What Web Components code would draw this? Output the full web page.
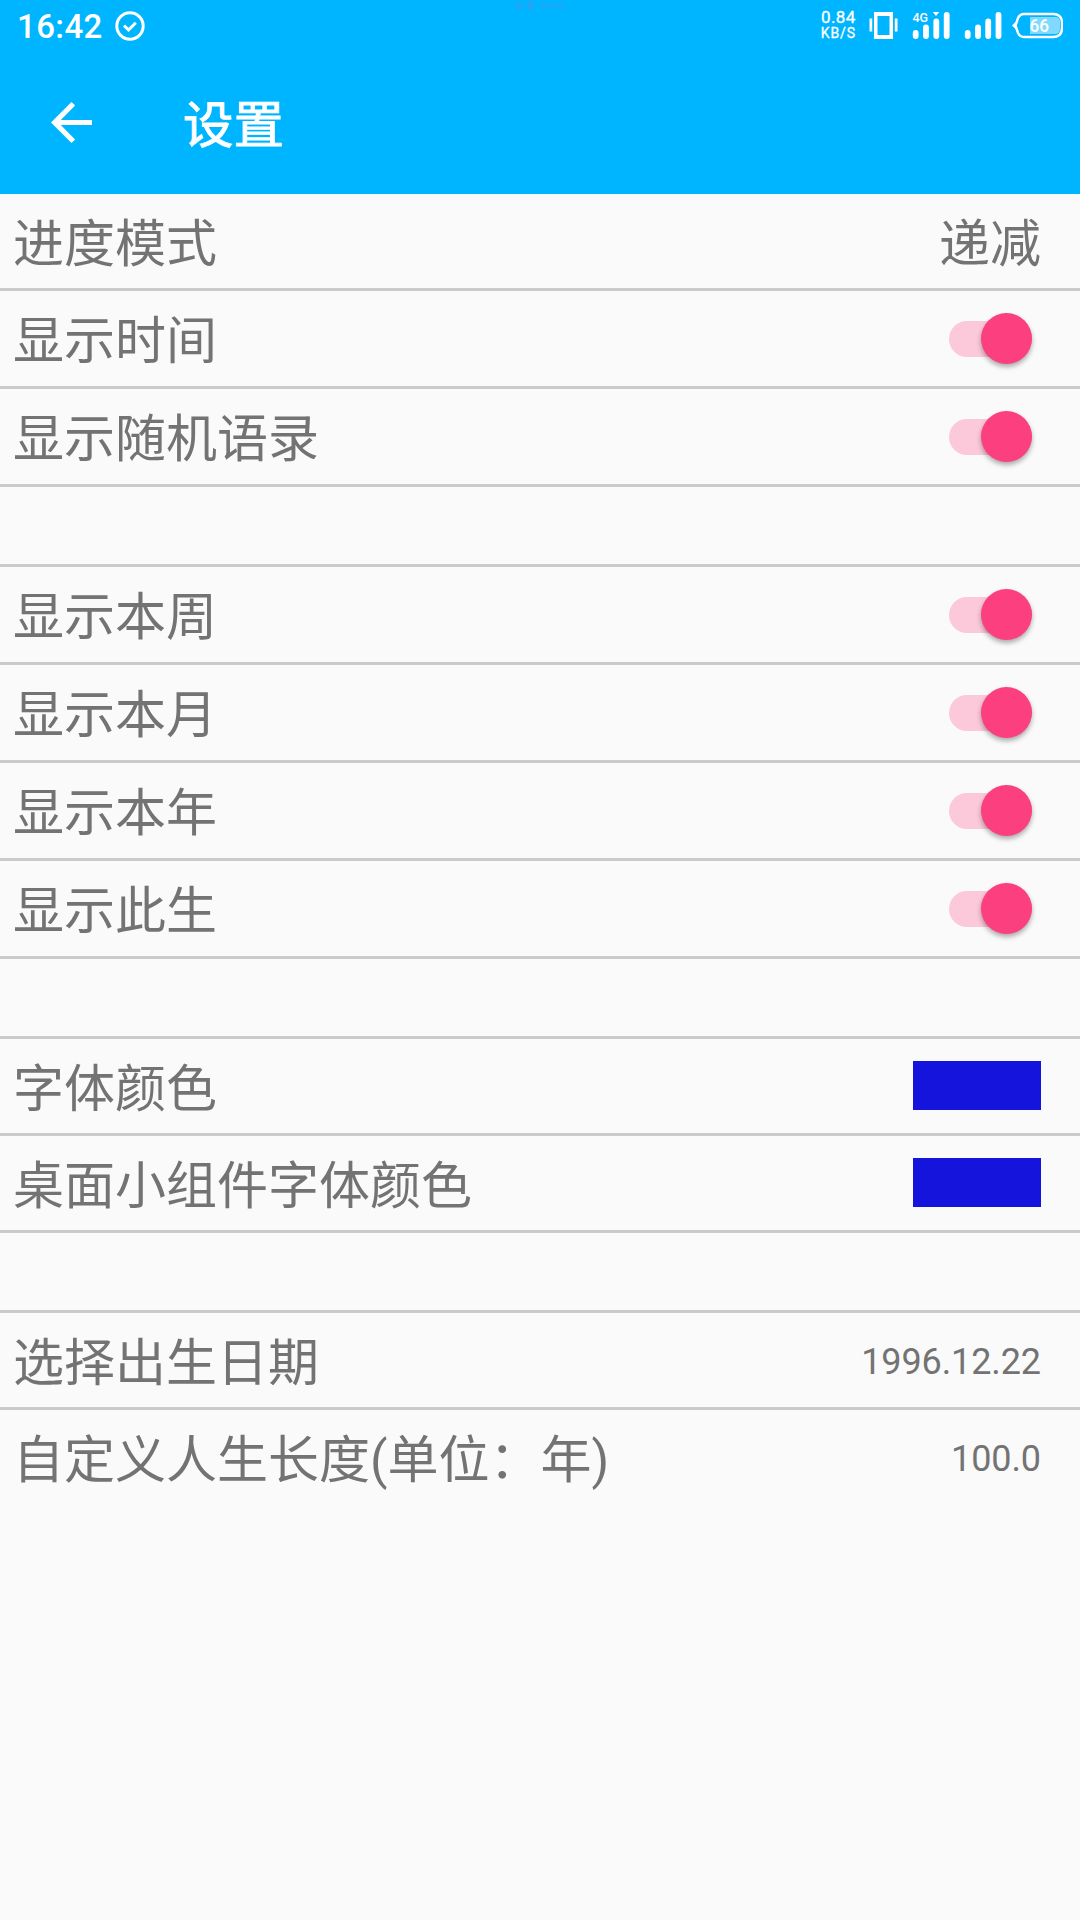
<!DOCTYPE html>
<html lang="zh-CN">
<head>
<meta charset="UTF-8">
<title>设置</title>
<style>
  body {
    margin: 0;
    background: #fafafa;
    color: #737373;
    font-family: Roboto, "Noto Sans CJK SC", sans-serif;
    --brand: #00b5ff;
    --accent: #fb3f7f;
    --divider: #cacaca;
  }
</style>
</head>
<body>
<settings-page>
  <status-bar slot="header" time="16:42" speed="0.84" battery="66"></status-bar>
  <app-toolbar slot="header">设置</app-toolbar>

  <setting-group>
    <setting-row>进度模式<span slot="value">递减</span></setting-row>
    <setting-row tall>显示时间<toggle-switch slot="value"></toggle-switch></setting-row>
    <setting-row tall>显示随机语录<toggle-switch slot="value"></toggle-switch></setting-row>
  </setting-group>
  <setting-group>
    <setting-row tall>显示本周<toggle-switch slot="value"></toggle-switch></setting-row>
    <setting-row tall>显示本月<toggle-switch slot="value"></toggle-switch></setting-row>
    <setting-row tall>显示本年<toggle-switch slot="value"></toggle-switch></setting-row>
    <setting-row tall>显示此生<toggle-switch slot="value"></toggle-switch></setting-row>
  </setting-group>
  <setting-group>
    <setting-row>字体颜色<color-swatch slot="value" color="#1414dc"></color-swatch></setting-row>
    <setting-row>桌面小组件字体颜色<color-swatch slot="value" color="#1414dc"></color-swatch></setting-row>
  </setting-group>
  <setting-group>
    <setting-row small>选择出生日期<span slot="value">1996.12.22</span></setting-row>
    <setting-row small last>自定义人生长度(单位：年)<span slot="value">100.0</span></setting-row>
  </setting-group>
</settings-page>

<script>
/**
 * Base class: renders the template of the subclass in an open shadow root
 */
class BaseElement extends HTMLElement {
  constructor() {
    super();
    this.attachShadow({ mode: "open" });
  }

  connectedCallback() {
    this.shadowRoot.innerHTML = this.render();
  }
}

/**
 * SettingsPage: header on top, groups below
 */
class SettingsPage extends BaseElement {
  render() {
    return `
      <style>
        :host {
          display: flex;
          flex-direction: column;
          width: 1080px;
          height: 1920px;
          overflow: hidden;
        }
        header {
          height: 194px;
          background: var(--brand);
          color: #fff;
        }
        main {
          display: flex;
          flex-direction: column;
        }
      </style>
      <header><slot name="header"></slot></header>
      <main><slot></slot></main>
    `;
  }
}

/**
 * StatusBar
 *
 * Attributes:
 * - time: clock text
 * - speed: network speed in KB/S
 * - battery: battery percentage
 */
class StatusBar extends BaseElement {
  render() {
    return `
      <style>
        :host {
          position: relative;
          display: flex;
          justify-content: space-between;
          height: 50px;
          box-sizing: border-box;
          padding: 0 17px;
        }
        .side {
          display: flex;
          align-items: center;
          height: 52px;
        }
        .time {
          font-size: 33px;
          font-weight: 500;
          letter-spacing: 0.4px;
          margin-right: 12px;
        }
        .speed {
          display: flex;
          flex-direction: column;
          align-items: center;
          font-size: 17px;
          line-height: 15px;
          letter-spacing: 0.4px;
          margin: 0 13px 1px 0;
          -webkit-text-stroke: 0.3px #fff;
        }
        .speed small {
          font-size: 14px;
          line-height: 16px;
          letter-spacing: 0.9px;
        }
        svg {
          display: block;
          fill: #fff;
        }
        svg text {
          font-weight: 500;
        }
        .mark {
          position: absolute;
          left: 514px;
          top: 0;
          fill: #3a9bf0;
          opacity: 0.5;
        }
      </style>
      <div class="side">
        <span class="time">${this.getAttribute("time")}</span>
        <svg width="30" height="52" viewBox="0 0 30 52">
          <circle cx="15" cy="26" r="13.2" fill="none" stroke="#fff" stroke-width="3"/>
          <path d="M9 25.500l4.500 4.500 7.300-7.300" fill="none" stroke="#fff" stroke-width="3"/>
        </svg>
      </div>
      <svg class="mark" width="52" height="12" viewBox="0 0 52 12">
        <path d="M2 2h6v7H2zM13 1h7v9h-7zM27 3h4v5h-4zM33 3h4v5h-4zM39 3h4v5h-4zM45 3h4v5h-4z"/>
      </svg>
      <div class="side">
        <div class="speed">
          <span>${this.getAttribute("speed")}</span>
          <small>KB/S</small>
        </div>
        <!-- vibrate, mobile signal, second signal, battery -->
        <svg width="194" height="52" viewBox="869 0 194 52">
          <path d="M874 12h19v27h-19zM877.500 16v19h12v-19z" fill-rule="evenodd"/>
          <path d="M869.500 18.500h2.700v13h-2.700zM894.800 18.500h2.700v13h-2.700z"/>
          <text x="912.500" y="22" font-size="13.500" textLength="15.500" lengthAdjust="spacingAndGlyphs">4G</text>
          <path d="M932.800 12h6.400l-3.200 4z"/>
          <g stroke="#fff" stroke-width="5.800" stroke-linecap="round">
            <path d="M915.700 33v3M926 27.500v8.500M936.300 21.500v14.500M946.700 14.800v21.200"/>
            <path d="M967.700 33v3M978 27.500v8.500M988.200 21.500v14.500M998.500 14.800v21.200"/>
          </g>
          <path d="M1030 17h25q5 0 5 5v7q0 5-5 5h-25z" fill-opacity="0.5"/>
          <path d="M1024 14h29q9 0 9 9v5q0 9-9 9h-29q-4 0-6-4l-2.500-7.500 2.500-7.500q2-4 6-4z" fill="none" stroke="#fff" stroke-width="2.400"/>
          <path d="M1016 21.500l-4 4 4 4z"/>
          <text x="1029.500" y="32" font-size="18.500" textLength="19.500" lengthAdjust="spacingAndGlyphs">${this.getAttribute("battery")}</text>
        </svg>
      </div>
    `;
  }
}

/**
 * AppToolbar: back arrow and page title
 */
class AppToolbar extends BaseElement {
  render() {
    return `
      <style>
        :host {
          display: flex;
          align-items: center;
          height: 144px;
          padding-left: 51px;
          font-size: 50.5px;
        }
        svg {
          width: 41px;
          height: 41px;
          margin-right: 91px;
        }
        span {
          line-height: 60px;
          padding-top: 7px;
          -webkit-text-stroke: 0.9px #fff;
        }
      </style>
      <svg viewBox="4 4 16 16" fill="#fff">
        <path d="M20 11H7.830l5.590-5.590L12 4l-8 8 8 8 1.410-1.410L7.830 13H20v-2z"/>
      </svg>
      <span><slot></slot></span>
    `;
  }
}

/**
 * SettingGroup: rows followed by an empty band, which the next group closes with a line
 */
class SettingGroup extends BaseElement {
  render() {
    return `
      <style>
        :host {
          display: block;
        }
        :host(:not(:last-child)) {
          padding-bottom: 77px;
          border-bottom: 3px solid var(--divider);
        }
      </style>
      <slot></slot>
    `;
  }
}

/**
 * SettingRow
 *
 * Attributes:
 * - tall: row that holds a switch
 * - small: value in the small size
 * - last: no line below
 */
class SettingRow extends BaseElement {
  render() {
    return `
      <style>
        :host {
          display: flex;
          align-items: center;
          justify-content: space-between;
          height: 94px;
          padding: 0 39px 0 13px;
          border-bottom: 3px solid var(--divider);
          font-size: 51px;
          line-height: 60px;
        }
        :host([tall]) {
          height: 95px;
        }
        :host([last]) {
          border-bottom: 0;
        }
        .label,
        ::slotted(span) {
          padding-top: 8px;
        }
        :host([tall]) .label {
          padding-top: 7px;
        }
        :host([small]) ::slotted(span) {
          font-size: 36px;
          letter-spacing: -0.1px;
          padding-top: 4px;
        }
      </style>
      <span class="label"><slot></slot></span>
      <slot name="value"></slot>
    `;
  }
}

/**
 * ToggleSwitch: switch in the "on" state
 */
class ToggleSwitch extends BaseElement {
  render() {
    return `
      <style>
        :host {
          display: flex;
          align-items: center;
          justify-content: flex-end;
          width: 83px;
          height: 36px;
          margin-right: 9px;
          border-radius: 18px;
          background: #fbc9da;
        }
        i {
          flex: none;
          width: 51px;
          height: 51px;
          border-radius: 50%;
          background: var(--accent);
          box-shadow: 0 3px 5px rgba(0, 0, 0, 0.32);
        }
      </style>
      <i></i>
    `;
  }
}

/**
 * ColorSwatch
 *
 * Attributes:
 * - color: fill colour
 */
class ColorSwatch extends BaseElement {
  render() {
    return `
      <style>
        :host {
          display: block;
          width: 128px;
          height: 49px;
          margin-bottom: 1px;
          background: ${this.getAttribute("color")};
        }
      </style>
    `;
  }
}

customElements.define("settings-page", SettingsPage);
customElements.define("status-bar", StatusBar);
customElements.define("app-toolbar", AppToolbar);
customElements.define("setting-group", SettingGroup);
customElements.define("setting-row", SettingRow);
customElements.define("toggle-switch", ToggleSwitch);
customElements.define("color-swatch", ColorSwatch);
</script>
</body>
</html>
